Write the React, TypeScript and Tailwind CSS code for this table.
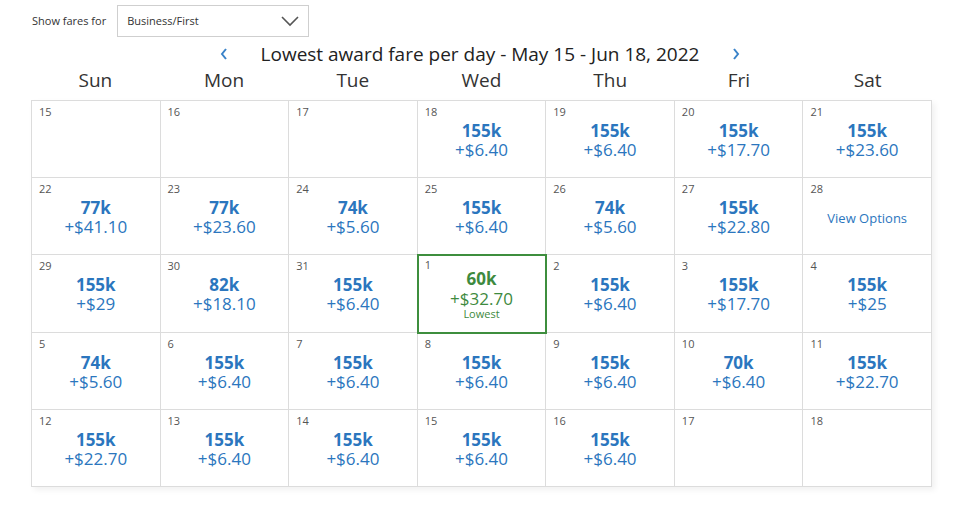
import React from "react";

type Day = { d: number; miles?: string; fee?: string; lowest?: boolean; options?: boolean };

const weeks: Day[][] = [
    [{ d: 15 }, { d: 16 }, { d: 17 }, { d: 18, miles: "155k", fee: "+$6.40" }, { d: 19, miles: "155k", fee: "+$6.40" }, { d: 20, miles: "155k", fee: "+$17.70" }, { d: 21, miles: "155k", fee: "+$23.60" }],
    [{ d: 22, miles: "77k", fee: "+$41.10" }, { d: 23, miles: "77k", fee: "+$23.60" }, { d: 24, miles: "74k", fee: "+$5.60" }, { d: 25, miles: "155k", fee: "+$6.40" }, { d: 26, miles: "74k", fee: "+$5.60" }, { d: 27, miles: "155k", fee: "+$22.80" }, { d: 28, options: true }],
    [{ d: 29, miles: "155k", fee: "+$29" }, { d: 30, miles: "82k", fee: "+$18.10" }, { d: 31, miles: "155k", fee: "+$6.40" }, { d: 1, miles: "60k", fee: "+$32.70", lowest: true }, { d: 2, miles: "155k", fee: "+$6.40" }, { d: 3, miles: "155k", fee: "+$17.70" }, { d: 4, miles: "155k", fee: "+$25" }],
    [{ d: 5, miles: "74k", fee: "+$5.60" }, { d: 6, miles: "155k", fee: "+$6.40" }, { d: 7, miles: "155k", fee: "+$6.40" }, { d: 8, miles: "155k", fee: "+$6.40" }, { d: 9, miles: "155k", fee: "+$6.40" }, { d: 10, miles: "70k", fee: "+$6.40" }, { d: 11, miles: "155k", fee: "+$22.70" }],
    [{ d: 12, miles: "155k", fee: "+$22.70" }, { d: 13, miles: "155k", fee: "+$6.40" }, { d: 14, miles: "155k", fee: "+$6.40" }, { d: 15, miles: "155k", fee: "+$6.40" }, { d: 16, miles: "155k", fee: "+$6.40" }, { d: 17 }, { d: 18 }],
];

const dayNames = ["Sun", "Mon", "Tue", "Wed", "Thu", "Fri", "Sat"];

const Cell: React.FC<{ day: Day }> = ({ day }) => {
    if (day.lowest) {
        return (
            <div className="h-[77.2px] border-r border-b border-[#dcdcdc] outline-2 outline-[#3e8e3e] -outline-offset-1 relative">
                <div className="px-[7px] pt-[3px] text-[11px] leading-[14px] text-[#555]">{day.d}</div>
                <div className="flex flex-col items-center -mt-[3px] text-[#3e8a3e]">
                    <span className="text-[17px] font-bold leading-[20px]">{day.miles}</span>
                    <span className="text-[17px] leading-[19px]">{day.fee}</span>
                    <span className="text-[11px] leading-[14px] -mt-[1px]">Lowest</span>
                </div>
            </div>
        );
    }
    return (
        <div className="h-[77.2px] border-r border-b border-[#dcdcdc]">
            <div className="px-[7px] pt-[4px] text-[11px] leading-[14px] text-[#555]">{day.d}</div>
            {day.miles && (
                <div className="flex flex-col items-center mt-[2px] text-[#2b76be]">
                    <span className="text-[17px] font-bold leading-[19px]">{day.miles}</span>
                    <span className="text-[17px] leading-[19px]">{day.fee}</span>
                </div>
            )}
            {day.options && (
                <div className="text-center mt-[13px] text-[13px] leading-[18px] text-[#2b76be]">View Options</div>
            )}
        </div>
    );
};

const App: React.FC = () => {
    return (
        <div className="w-[960px] h-[518px] bg-white overflow-hidden" style={{ fontFamily: '"Open Sans", "Noto Sans", sans-serif' }}>
            <div className="flex items-center pt-[5px] pl-[32px]">
                <span className="text-[11px] text-[#333]">Show fares for</span>
                <div className="ml-[11px] w-[192px] h-[32px] border border-[#cfcfcf] flex items-center justify-between pl-[9px] pr-[8px]">
                    <span className="text-[11px] text-[#333]">Business/First</span>
                    <svg width="20" height="12" viewBox="0 0 20 12" fill="none">
                        <path d="M2 2l8 8 8-8" stroke="#555" strokeWidth="1.6" />
                    </svg>
                </div>
            </div>

            <div className="flex items-center justify-center gap-[32px] mt-[4px] h-[26px]">
                <svg width="10" height="14" viewBox="0 0 10 14" fill="none">
                    <path d="M7 2L3 7l4 5" stroke="#3a83c9" strokeWidth="2" />
                </svg>
                <span className="text-[19px] text-[#222] leading-[26px]">Lowest award fare per day - May 15 - Jun 18, 2022</span>
                <svg width="10" height="14" viewBox="0 0 10 14" fill="none">
                    <path d="M3 2l4 5-4 5" stroke="#3a83c9" strokeWidth="2" />
                </svg>
            </div>

            <div className="ml-[31px] w-[901px] grid grid-cols-7 h-[26px] items-center">
                {dayNames.map((n) => (
                    <div key={n} className="text-center text-[19px] leading-[26px] text-[#333]">{n}</div>
                ))}
            </div>

            <div className="ml-[31px] mt-[7px] w-[901px] grid grid-cols-7 border-l border-t border-[#dcdcdc] shadow-[3px_3px_6px_rgba(0,0,0,0.06)]">
                {weeks.flat().map((day, i) => (
                    <Cell key={i} day={day} />
                ))}
            </div>
        </div>
    );
};

export default App;
